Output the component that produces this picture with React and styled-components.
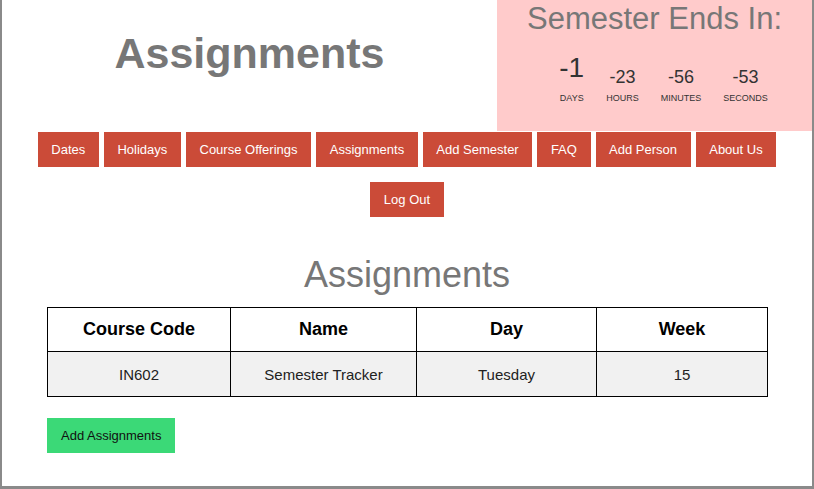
import React from "react";
import styled, { createGlobalStyle } from "styled-components";

const Global = createGlobalStyle`
  html, body { margin: 0; padding: 0; background: #fff; }
  body { font-family: "Liberation Sans", Arial, sans-serif; }
  * { box-sizing: border-box; }
`;

const Frame = styled.div`
  width: 814px;
  height: 489px;
  border-left: 2px solid #8a8a8a;
  border-right: 2px solid #8a8a8a;
  border-bottom: 3px solid #8a8a8a;
  background: #fff;
  overflow: hidden;
  display: flex;
  flex-direction: column;
`;

const Header = styled.header`
  display: flex;
  height: 131px;
`;

const TitleArea = styled.div`
  flex: 1;
  padding-top: 28px;
  text-align: center;
`;

const Title = styled.h1`
  margin: 0;
  font-size: 43px;
  line-height: 50px;
  font-weight: bold;
  color: #777;
`;

const CountdownBox = styled.div`
  width: 315px;
  background: #ffcbcb;
  padding-top: 1px;
  text-align: center;
`;

const CountdownTitle = styled.h2`
  margin: 0;
  font-size: 31px;
  line-height: 36px;
  font-weight: normal;
  color: #777;
`;

const Counter = styled.div`
  display: flex;
  justify-content: center;
  align-items: flex-end;
  gap: 22px;
  margin-top: 16px;
  padding-left: 18px;
`;

const Unit = styled.div`
  display: flex;
  flex-direction: column;
  align-items: center;
`;

const Num = styled.span`
  font-size: ${(p) => (p.$big ? "28px" : "18px")};
  line-height: ${(p) => (p.$big ? "30px" : "20px")};
  margin-bottom: ${(p) => (p.$big ? "4px" : "0")};
  color: #333;
`;

const Label = styled.span`
  margin-top: 6px;
  font-size: 9px;
  line-height: 10px;
  color: #333;
  text-transform: uppercase;
`;

const Nav = styled.nav`
  display: flex;
  flex-wrap: wrap;
  justify-content: center;
  gap: 15px 5px;
  margin-top: 1px;
  padding: 0 30px;
`;

const NavButton = styled.button`
  border: none;
  background: #cb4b38;
  color: #fff;
  font-family: "Liberation Sans", Arial, sans-serif;
  font-size: 13px;
  line-height: 15px;
  padding: 10px 13.6px;
  cursor: pointer;
`;

const Main = styled.main`
  padding: 0 45px;
`;

const PageHeading = styled.h2`
  margin: 37px 0 12px;
  text-align: center;
  font-size: 36px;
  line-height: 41px;
  font-weight: normal;
  color: #777;
`;

const Table = styled.table`
  width: 720px;
  margin: 0 auto;
  border-collapse: collapse;
  table-layout: fixed;
`;

const Th = styled.th`
  border: 1px solid #000;
  background: #fff;
  color: #000;
  font-size: 18px;
  line-height: 21px;
  font-weight: bold;
  padding: 11px 4px;
  text-align: center;
`;

const Td = styled.td`
  border: 1px solid #000;
  background: #f1f1f1;
  color: #222;
  font-size: 15px;
  line-height: 17px;
  padding: 13.5px 4px;
  text-align: center;
`;

const AddButton = styled.button`
  margin-top: 21px;
  border: none;
  background: #3bd977;
  color: #111;
  font-family: "Liberation Sans", Arial, sans-serif;
  font-size: 13px;
  line-height: 15px;
  padding: 10px 14px;
  cursor: pointer;
`;

const navItems = [
  "Dates",
  "Holidays",
  "Course Offerings",
  "Assignments",
  "Add Semester",
  "FAQ",
  "Add Person",
  "About Us",
  "Log Out",
];

const units = [
  { v: "-1", l: "Days", big: true },
  { v: "-23", l: "Hours" },
  { v: "-56", l: "Minutes" },
  { v: "-53", l: "Seconds" },
];

const cols = [183, 186, 180, 171];

export default function App() {
  return (
    <>
      <Global />
      <Frame>
        <Header>
          <TitleArea>
            <Title>Assignments</Title>
          </TitleArea>
          <CountdownBox>
            <CountdownTitle>Semester Ends In:</CountdownTitle>
            <Counter>
              {units.map((u) => (
                <Unit key={u.l}>
                  <Num $big={u.big}>{u.v}</Num>
                  <Label>{u.l}</Label>
                </Unit>
              ))}
            </Counter>
          </CountdownBox>
        </Header>
        <Nav>
          {navItems.map((n) => (
            <NavButton key={n}>{n}</NavButton>
          ))}
        </Nav>
        <Main>
          <PageHeading>Assignments</PageHeading>
          <Table>
            <colgroup>
              {cols.map((w, i) => (
                <col key={i} style={{ width: w }} />
              ))}
            </colgroup>
            <thead>
              <tr>
                <Th>Course Code</Th>
                <Th>Name</Th>
                <Th>Day</Th>
                <Th>Week</Th>
              </tr>
            </thead>
            <tbody>
              <tr>
                <Td>IN602</Td>
                <Td>Semester Tracker</Td>
                <Td>Tuesday</Td>
                <Td>15</Td>
              </tr>
            </tbody>
          </Table>
          <AddButton>Add Assignments</AddButton>
        </Main>
      </Frame>
    </>
  );
}
